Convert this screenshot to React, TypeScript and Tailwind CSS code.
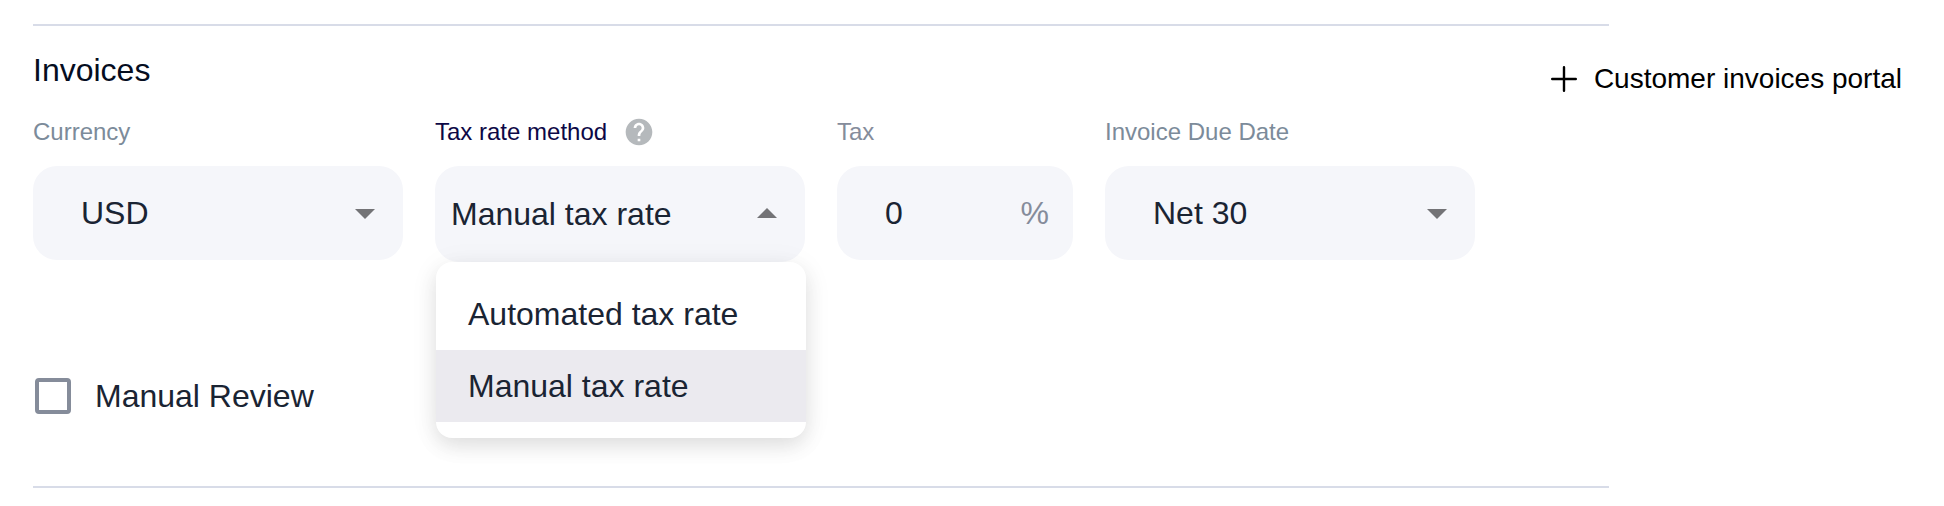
import React, { FC, ReactNode, useState } from "react";

const taxMethods = ["Automated tax rate", "Manual tax rate"];

interface ArrowProps {
  up?: boolean;
}

const Arrow: FC<ArrowProps> = ({ up }) => (
  <svg
    viewBox="0 0 24 24"
    aria-hidden="true"
    className={`pointer-events-none absolute inset-y-0 right-3.5 my-auto size-12 text-[#737376] ${
      up ? "rotate-180" : ""
    }`}
  >
    <path d="M7 10l5 5 5-5z" fill="currentColor" />
  </svg>
);

interface FieldProps {
  id: string;
  label: string;
  labelClass?: string;
  icon?: ReactNode;
  children: ReactNode;
}

const Field: FC<FieldProps> = ({
  id,
  label,
  labelClass = "text-[#7c8b9a]",
  icon,
  children,
}) => (
  <div className="min-w-0">
    <div className="mb-4 flex h-9 items-center gap-4">
      <label htmlFor={id} className={`text-2xl whitespace-nowrap ${labelClass}`}>
        {label}
      </label>
      {icon}
    </div>
    <div className="relative">{children}</div>
  </div>
);

const HelpIcon = () => (
  <svg viewBox="0 0 24 24" aria-hidden="true" className="size-8 text-[#b5b9bc]">
    <path
      fill="currentColor"
      d="M12 2C6.48 2 2 6.48 2 12s4.48 10 10 10 10-4.48 10-10S17.52 2 12 2zm1 17h-2v-2h2v2zm2.07-7.75l-.9.92C13.45 12.9 13 13.5 13 15h-2v-.5c0-1.1.45-2.1 1.17-2.83l1.24-1.26c.37-.36.59-.86.59-1.41 0-1.1-.9-2-2-2s-2 .9-2 2H8c0-2.21 1.79-4 4-4s4 1.79 4 4c0 .88-.36 1.68-.93 2.25z"
    />
  </svg>
);

const App: FC = () => {
  const [method, setMethod] = useState("Manual tax rate");
  const [open, setOpen] = useState(true);

  return (
    <main className="bg-white py-6 pr-[42px] pl-[33px] font-['Liberation_Sans',Arial,sans-serif] text-[32px] leading-10 text-[#1a2433]">
      <hr className="max-w-[1576px] border-t-2 border-[#d8dce8]" />

      <header className="mt-6 mb-1.5 flex items-start justify-between">
        <h2 className="text-[#050d1f]">Invoices</h2>
        <button
          type="button"
          className="flex h-[58px] items-center gap-3.5 text-[28px] text-black"
        >
          <svg
            viewBox="0 0 32 32"
            aria-hidden="true"
            fill="none"
            stroke="currentColor"
            strokeWidth="2.4"
            strokeLinecap="round"
            className="size-8"
          >
            <path d="M16 4.2v23.6M4.2 16h23.6" />
          </svg>
          Customer invoices portal
        </button>
      </header>

      <div className="grid max-w-[1442px] grid-cols-[370fr_370fr_236fr_370fr] items-start gap-8">
        <Field id="currency" label="Currency">
          <select
            id="currency"
            className="block h-[94px] w-full appearance-none rounded-3xl bg-[#f5f6fa] pr-16 pl-12"
          >
            <option>USD</option>
            <option>EUR</option>
          </select>
          <Arrow />
        </Field>

        <Field
          id="tax-method"
          label="Tax rate method"
          labelClass="text-[#0d0846]"
          icon={<HelpIcon />}
        >
          <select
            id="tax-method"
            value={method}
            onChange={(e) => setMethod(e.target.value)}
            onMouseDown={(e) => {
              e.preventDefault();
              setOpen(!open);
            }}
            className="block h-24 w-full appearance-none rounded-3xl bg-[#f5f6fa] pr-16 pl-4"
          >
            {taxMethods.map((item) => (
              <option key={item}>{item}</option>
            ))}
          </select>
          <Arrow up={open} />
          {open && (
            <ul
              role="listbox"
              aria-label="Tax rate method"
              className="absolute top-full left-px z-10 w-full rounded-2xl bg-white py-4 shadow-[0_8px_20px_rgba(0,0,0,0.1),0_4px_32px_rgba(0,0,0,0.05)]"
            >
              {taxMethods.map((item) => (
                <li
                  key={item}
                  role="option"
                  aria-selected={item === method}
                  onClick={() => {
                    setMethod(item);
                    setOpen(false);
                  }}
                  className={`cursor-pointer px-8 py-4 whitespace-nowrap ${
                    item === method ? "bg-[#ebeaef]" : ""
                  }`}
                >
                  {item}
                </li>
              ))}
            </ul>
          )}
        </Field>

        <Field id="tax" label="Tax" labelClass="text-[#858c9b]">
          <div className="flex h-[94px] items-center rounded-3xl bg-[#f5f6fa] pr-6 pl-12">
            <input
              id="tax"
              type="text"
              inputMode="decimal"
              defaultValue="0"
              className="w-full min-w-0 flex-1 bg-transparent"
            />
            <span className="text-[#858c9b]">%</span>
          </div>
        </Field>

        <Field id="due-date" label="Invoice Due Date">
          <select
            id="due-date"
            className="block h-[94px] w-full appearance-none rounded-3xl bg-[#f5f6fa] pr-16 pl-12"
          >
            <option>Net 30</option>
            <option>Net 60</option>
          </select>
          <Arrow />
        </Field>
      </div>

      <div className="mt-[116px] ml-0.5 flex h-9 items-center gap-6">
        <input
          id="manual-review"
          type="checkbox"
          className="size-9 appearance-none rounded border-4 border-[#858c9a] checked:bg-[#858c9a]"
        />
        <label htmlFor="manual-review">Manual Review</label>
      </div>

      <hr className="mt-[72px] max-w-[1576px] border-t-2 border-[#d8dce8]" />
    </main>
  );
};

export default App;
